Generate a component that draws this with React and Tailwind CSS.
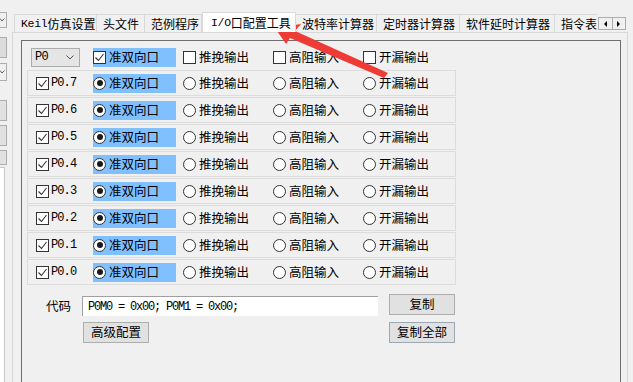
import React from "react";

const tabs = [
  { label: "Keil仿真设置", w: "w-[83px]" },
  { label: "头文件", w: "w-[49px]" },
  { label: "范例程序", w: "w-[58px]" },
  { label: "I/O口配置工具", w: "w-[94px]", active: true },
  { label: "波特率计算器", w: "w-[82px]" },
  { label: "定时器计算器", w: "w-[84px]" },
  { label: "软件延时计算器", w: "w-[96px]" },
  { label: "指令表", w: "w-[60px]" },
];

const options = ["准双向口", "推挽输出", "高阻输入", "开漏输出"];
const pins = ["P0.7", "P0.6", "P0.5", "P0.4", "P0.3", "P0.2", "P0.1", "P0.0"];

// latin runs in the old bitmap-ish mono look, CJK in Noto
function Mixed({ text }) {
  const parts = text.split(/([A-Za-z0-9./]+)/).filter(Boolean);
  return parts.map((p, i) =>
    /[A-Za-z0-9]/.test(p) ? (
      <span key={i} className="[font-family:'Liberation_Mono',monospace] text-[11.5px] tracking-[-0.3px]">
        {p}
      </span>
    ) : (
      <span key={i}>{p}</span>
    )
  );
}

function CheckBox({ checked }) {
  return (
    <span className="flex h-[13px] w-[13px] shrink-0 items-center justify-center border border-[#333333] bg-white">
      {checked && (
        <svg width="11" height="11" viewBox="0 0 11 11">
          <polyline points="1.5,5.5 4.5,8.5 9.5,2" fill="none" stroke="#333333" strokeWidth="1.1" />
        </svg>
      )}
    </span>
  );
}

function Radio({ checked }) {
  return (
    <span className="flex h-[13px] w-[13px] shrink-0 items-center justify-center rounded-full border border-[#333333] bg-white">
      {checked && <span className="h-[6px] w-[6px] rounded-full bg-[#1a1a1a]" />}
    </span>
  );
}

function Option({ label, selected, check }) {
  const Mark = check ? CheckBox : Radio;
  return (
    <div className="flex w-[90px] items-center">
      <div className={`flex h-[19px] items-center ${selected ? "w-[83px] bg-[#80c0ff]" : ""}`}>
        <Mark checked={selected} />
        <span className="ml-[3px] whitespace-nowrap">{label}</span>
      </div>
    </div>
  );
}

function Button({ children, className = "" }) {
  return (
    <div
      className={`flex h-[21px] w-[66px] items-center justify-center border bg-[#e1e1e1] text-[12.5px] ${className}`}
    >
      {children}
    </div>
  );
}

function LeftStrip() {
  return (
    <div className="flex w-[12px] shrink-0 flex-col">
      <div className="mt-[12px] flex h-[16px] w-[7px] items-center border-y border-r border-[#adadad] bg-[#f0f0f0]">
        <svg width="5" height="4" viewBox="0 0 5 4">
          <polyline points="0,0.5 2,3 4.5,0.5" fill="none" stroke="#606060" strokeWidth="1" />
        </svg>
      </div>
      <div className="mt-[9px] h-[21px] w-[7px] border-y border-r border-[#adadad] bg-[#dcdcdc]" />
      <div className="mt-[5px] flex h-[18px] w-[7px] items-center border-y border-r border-[#adadad] bg-[#f0f0f0]">
        <svg width="5" height="4" viewBox="0 0 5 4">
          <polyline points="0,0.5 2,3 4.5,0.5" fill="none" stroke="#606060" strokeWidth="1" />
        </svg>
      </div>
      <div className="mt-[19px] h-[21px] w-[7px] border-y border-r border-[#adadad] bg-[#e1e1e1]" />
      <div className="mt-[4px] h-[21px] w-[7px] border-y border-r border-[#adadad] bg-[#e1e1e1]" />
      <div className="mt-[4px] h-[15px] w-[7px] border-y border-r border-[#adadad] bg-[#e1e1e1]" />
      <div className="mt-[2px] flex-1 w-[5px] border-t border-r border-[#c8c8c8] bg-white" />
    </div>
  );
}

export default function App() {
  return (
    <div className="relative h-[382px] w-[633px] overflow-hidden bg-[#f0f0f0] [font-family:'Noto_Sans_CJK_SC','Microsoft_YaHei',sans-serif] text-[12.5px] leading-none text-black">
      <div className="flex h-full">
        <LeftStrip />
        <div className="flex min-w-0 flex-1 flex-col pr-[5px]">
          {/* tab strip */}
          <div className="mt-[12px] flex h-[20px] items-end">
            <div className="flex w-[586px] items-end overflow-hidden pl-[2px] text-[12px]">
              {tabs.map((t) =>
                t.active ? (
                  <div
                    key={t.label}
                    className={`relative z-10 -mb-px flex h-[21px] shrink-0 items-center whitespace-nowrap border-x border-t border-[#d9d9d9] bg-white pl-[8px] ${t.w}`}
                  >
                    <Mixed text={t.label} />
                  </div>
                ) : (
                  <div
                    key={t.label}
                    className={`-ml-px flex h-[18px] shrink-0 items-center whitespace-nowrap border-x border-t border-[#d9d9d9] bg-[#f0f0f0] pl-[6px] first:ml-0 ${t.w}`}
                  >
                    <Mixed text={t.label} />
                  </div>
                )
              )}
            </div>
            <div className="mb-[2px] flex h-[13px] w-[28px] border border-[#adadad] bg-[#f0f0f0]">
              <div className="flex flex-1 items-center justify-center border-r border-[#adadad]">
                <span className="h-0 w-0 border-y-[3px] border-r-[3px] border-y-transparent border-r-black" />
              </div>
              <div className="flex flex-1 items-center justify-center">
                <span className="h-0 w-0 border-y-[3px] border-l-[3px] border-y-transparent border-l-black" />
              </div>
            </div>
          </div>

          {/* tab page */}
          <div className="flex flex-1 flex-col border-x border-t border-[#d9d9d9] pl-[8px] pr-[6px] pt-[7px]">
            <div className="flex-1 border-x border-t border-[#6e6e6e] pl-[5px] pt-[6px]">
              {/* port selector row */}
              <div className="flex h-[20px] items-center">
                <div className="flex w-[66px] items-center pl-[4px]">
                  <div className="flex h-[19px] w-[49px] items-center justify-between border border-[#acacac] bg-[#e5e5e5] pl-[3px] pr-[5px]">
                    <span className="[font-family:'Liberation_Mono',monospace] text-[12px] tracking-[-0.6px]">P0</span>
                    <svg width="8" height="5" viewBox="0 0 8 5">
                      <polyline points="0.5,0.5 4,4 7.5,0.5" fill="none" stroke="#555555" strokeWidth="1" />
                    </svg>
                  </div>
                </div>
                {options.map((o, i) => (
                  <Option key={o} label={o} selected={i === 0} check />
                ))}
              </div>

              {/* pin rows */}
              <div className="mt-[3px] flex flex-col gap-[1px]">
                {pins.map((p) => (
                  <div key={p} className="flex h-[26px] w-[429px] items-center border border-[#dcdcdc]">
                    <div className="flex w-[65px] items-center pl-[8px]">
                      <CheckBox checked />
                      <span className="ml-[2px] [font-family:'Liberation_Mono',monospace] text-[12px] tracking-[-0.9px]">
                        {p}
                      </span>
                    </div>
                    {options.map((o, i) => (
                      <Option key={o} label={o} selected={i === 0} />
                    ))}
                  </div>
                ))}
              </div>

              {/* code output */}
              <div className="mt-[9px] flex items-start">
                <div className="mt-[2px] flex h-[20px] w-[55px] items-center pl-[19px]">代码</div>
                <div className="mt-[2px] flex h-[20px] w-[296px] items-center border-l border-t border-[#a0a0a0] bg-white pl-[5px] [font-family:'Liberation_Mono',monospace] text-[12px] tracking-[-1.2px]">
                  P0M0 = 0x00; P0M1 = 0x00;
                </div>
                <Button className="ml-[11px] border-[#adadad]">复制</Button>
              </div>
              <div className="mt-[6px] flex items-start pl-[56px]">
                <Button className="border-[#adadad]">高级配置</Button>
                <Button className="ml-[240px] border-[#9aa8b6]">复制全部</Button>
              </div>
            </div>
          </div>
        </div>
      </div>

      {/* red annotation arrow */}
      <svg className="pointer-events-none absolute inset-0" width="633" height="382" viewBox="0 0 633 382">
        <polygon
          points="275,28 301,24 295,31 388,73 384,78 290,38 286,44"
          fill="#ef3b36"
        />
      </svg>
    </div>
  );
}
